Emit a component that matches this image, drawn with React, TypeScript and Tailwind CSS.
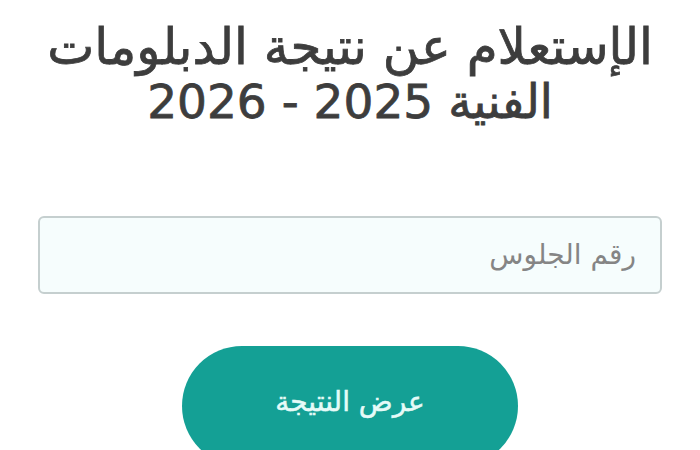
export default function App() {
  return (
    <div
      dir="rtl"
      className="w-[700px] h-[450px] overflow-hidden bg-white flex flex-col items-center"
      style={{ fontFamily: '"DejaVu Sans", "Noto Sans", sans-serif' }}
    >
      <h1 className="mt-[20px] text-center text-[47px] leading-[54px] font-normal text-[#3d3d3d] tracking-tight [-webkit-text-stroke:0.8px_#3d3d3d]">
        <span className="text-[50px]">الإستعلام عن نتيجة الدبلومات</span>
        <br />
        الفنية 2025 - 2026
      </h1>

      <div className="mt-[87px] w-[624px] h-[78px] shrink-0 rounded-md border-2 border-[#c5cfcf] bg-[#f6fdfd] flex items-center px-6">
        <span className="text-[28px] text-[#858585]">رقم الجلوس</span>
      </div>

      <button className="mt-[52px] w-[336px] h-[120px] shrink-0 rounded-full bg-[#14a095] flex items-center justify-center pb-2 text-[28px] text-[#e6fbf8] [-webkit-text-stroke:0.5px_#e6fbf8]">
        عرض النتيجة
      </button>
    </div>
  );
}
